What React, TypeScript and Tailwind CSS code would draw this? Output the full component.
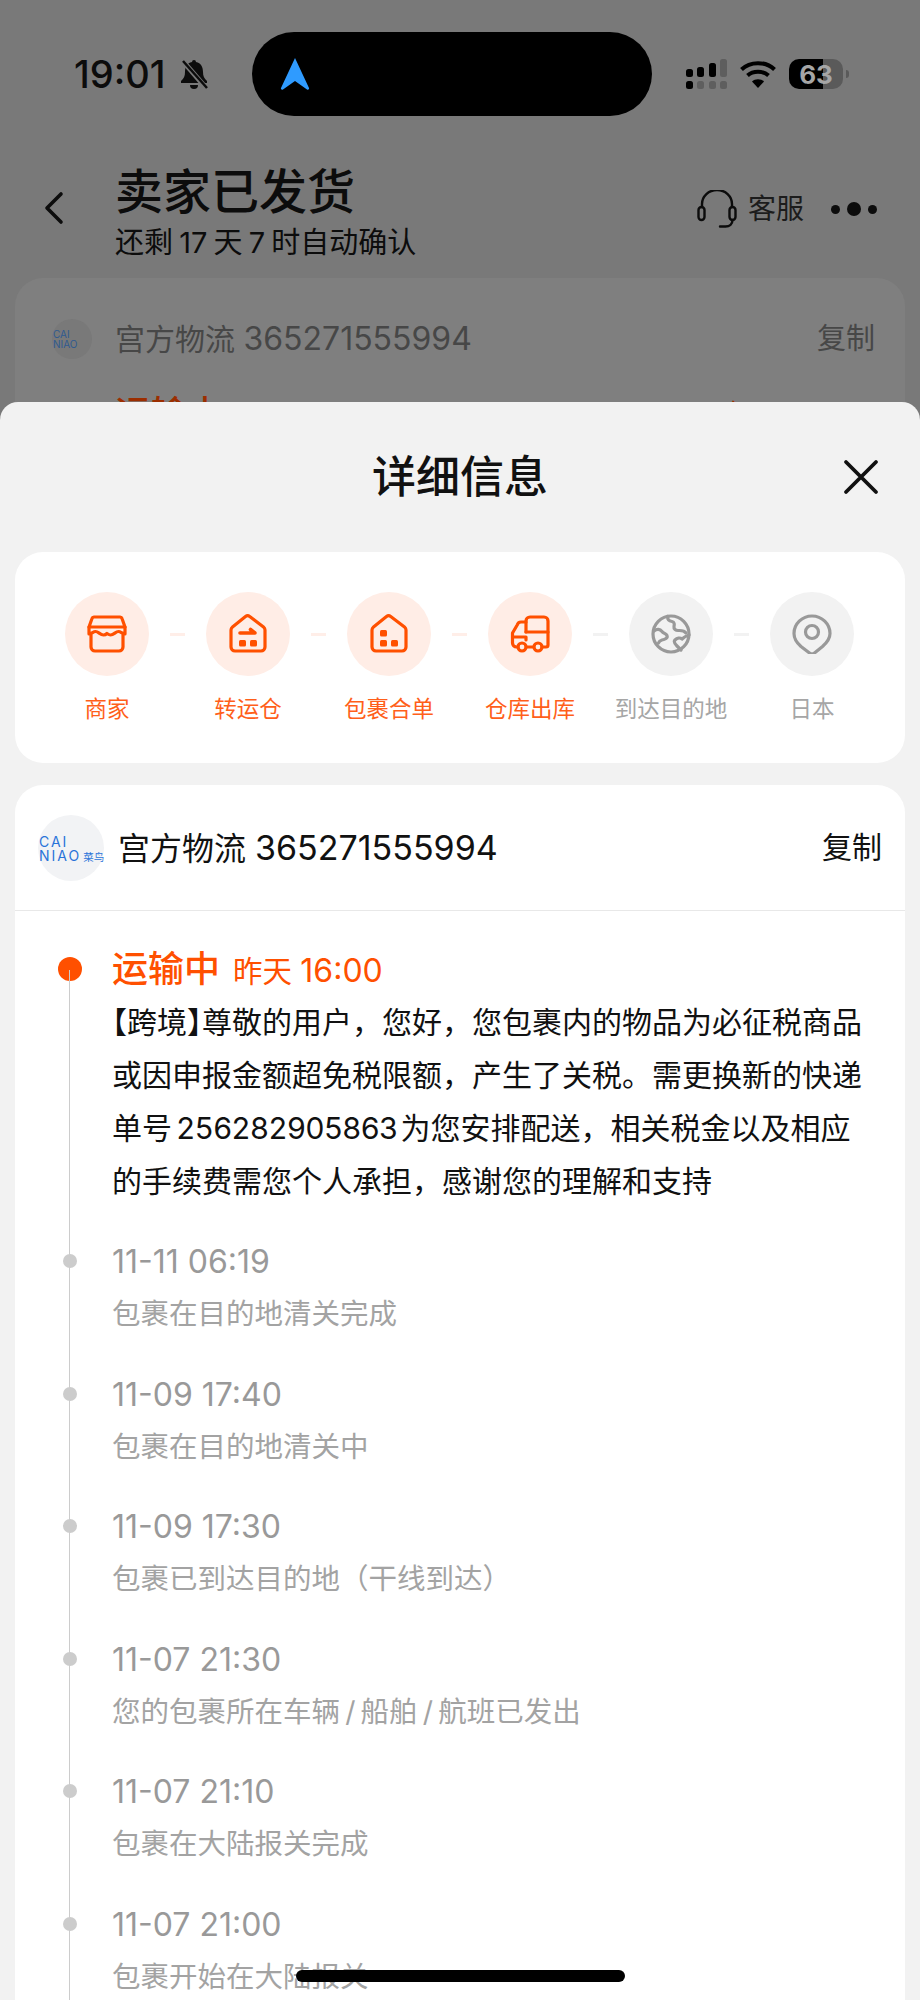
const cjk = "font-['Inter','Noto_Sans_CJK_SC',sans-serif]";

const ORANGE = '#ff5000';
const GREY = '#999999';

function Shop() {
  return (
    <svg width="40" height="40" viewBox="0 0 40 40" fill="none" stroke={ORANGE} strokeWidth="3.2" strokeLinejoin="round" strokeLinecap="round">
      <path d="M7 3h26a2 2 0 0 1 2 1.500L38 13H2l3-8.500A2 2 0 0 1 7 3z" />
      <path d="M2 13v7c3 0 4-2.500 6.500-2.500 3 0 4.500 3.500 8 3.500 1.500 0 2.500-.5 3.500-1.500 1.500 1 2.500 1.500 3.500 1.500 3.500 0 5-3.500 8-3.500 2.500 0 3.500 2.500 6.500 2.500v-7" />
      <path d="M4 21v12a4 4 0 0 0 4 4h24a4 4 0 0 0 4-4V21" />
    </svg>
  );
}

function HouseOutline() {
  return <path d="M17.500 2.500a3.500 3.500 0 0 1 4.200 0L35.500 13a4 4 0 0 1 1.500 3.200V33a4 4 0 0 1-4 4H7a4 4 0 0 1-4-4V16.200A4 4 0 0 1 4.500 13z" />;
}

function Transfer() {
  return (
    <svg width="40" height="40" viewBox="0 0 40 40" fill="none" stroke={ORANGE} strokeWidth="3.2" strokeLinejoin="round" strokeLinecap="round">
      <HouseOutline />
      <path d="M12 19h15l-4.500-3.500" strokeWidth="3.600" />
      <rect x="11" y="26" width="7" height="6.500" rx="1.500" fill={ORANGE} stroke="none" />
      <rect x="22" y="26" width="7" height="6.500" rx="1.500" fill={ORANGE} stroke="none" />
    </svg>
  );
}

function Parcels() {
  return (
    <svg width="40" height="40" viewBox="0 0 40 40" fill="none" stroke={ORANGE} strokeWidth="3.2" strokeLinejoin="round">
      <HouseOutline />
      <rect x="11" y="16" width="7" height="6.500" rx="1.500" fill={ORANGE} stroke="none" />
      <rect x="11" y="26" width="7" height="6.500" rx="1.500" fill={ORANGE} stroke="none" />
      <rect x="22" y="26" width="7" height="6.500" rx="1.500" fill={ORANGE} stroke="none" />
    </svg>
  );
}

function Truck() {
  return (
    <svg width="40" height="40" viewBox="0 0 40 40" fill="none" stroke={ORANGE} strokeWidth="3.2" strokeLinejoin="round" strokeLinecap="round">
      <path d="M16 18V7a4 4 0 0 1 4-4h14a4 4 0 0 1 4 4v24a2 2 0 0 1-2 2h-4" />
      <path d="M16 18h22" />
      <path d="M16 8h-5a4 4 0 0 0-3.800 3L2.500 19v10a4 4 0 0 0 4 4H8" />
      <path d="M2.500 23H16v3" />
      <path d="M16.500 33h7" />
      <circle cx="12" cy="33" r="4" />
      <circle cx="28" cy="33" r="4" />
    </svg>
  );
}

function Globe() {
  return (
    <svg width="40" height="40" viewBox="0 0 40 40" fill="none" stroke={GREY} strokeWidth="3.2" strokeLinejoin="round" strokeLinecap="round">
      <circle cx="20" cy="20" r="18" />
      <path d="M17 2.500c-1 3 1 4.500 4 5 2.500.5 2.500 3 2 5-.5 2.500 2 4 4 4 3 0 6-.5 8 2.500" />
      <path d="M3 17c3-2.500 6-2 8 .5 1.500 2 4 2 5 4 1 2.500-2 4-5 4.500-2 .5-3 1.500-3.500 3" />
      <path d="M38 21c-3 1-5 2-7 4-2-1.500-5-1-7 1-1.500 1.500 0 4 2 6 1.500 1.500 3 3 4 4" />
    </svg>
  );
}

function Pin() {
  return (
    <svg width="40" height="40" viewBox="0 0 40 40" fill="none" stroke={GREY} strokeWidth="3.2" strokeLinejoin="round">
      <path d="M20 2C10 2 2 10 2 19.500c0 6 3 9.500 7 13l8.500 6.500a4 4 0 0 0 5 0l8-6.500c4-3.500 7.500-7 7.500-13C38 10 30 2 20 2z" />
      <circle cx="20" cy="18" r="6.500" />
    </svg>
  );
}

const steps = [
  { label: '商家', icon: <Shop />, done: true },
  { label: '转运仓', icon: <Transfer />, done: true },
  { label: '包裹合单', icon: <Parcels />, done: true },
  { label: '仓库出库', icon: <Truck />, done: true },
  { label: '到达目的地', icon: <Globe />, done: false },
  { label: '日本', icon: <Pin />, done: false },
];

const history = [
  { time: '11-11 06:19', text: '包裹在目的地清关完成' },
  { time: '11-09 17:40', text: '包裹在目的地清关中' },
  { time: '11-09 17:30', text: '包裹已到达目的地（干线到达）' },
  { time: '11-07 21:30', text: '您的包裹所在车辆\u2009/\u2009船舶\u2009/\u2009航班已发出' },
  { time: '11-07 21:10', text: '包裹在大陆报关完成' },
  { time: '11-07 21:00', text: '包裹开始在大陆报关' },
];

function StatusBar() {
  return (
    <div className="flex h-[116px] items-start pt-[32px] pl-[74px]">
      <div className="flex h-[84px] w-[178px] items-center gap-[13px]">
        <span className="text-[38px] font-medium text-[#0c0c0c]">19:01</span>
        <svg width="30" height="30" viewBox="0 0 30 30">
          <path d="M15 1a2 2 0 0 1 2 2c5 1 7 5 7 10 0 4 1 6 4 9v2H2v-2c3-3 4-5 4-9 0-5 2-9 7-10a2 2 0 0 1 2-2z" fill="#0c0c0c" />
          <path d="M11 26h8a4 4 0 0 1-8 0z" fill="#0c0c0c" />
          <path d="M3 1l24 28" stroke="#797979" strokeWidth="5" />
          <path d="M4 2l24 27" stroke="#0c0c0c" strokeWidth="2.500" />
        </svg>
      </div>
      <div className="flex h-[84px] w-[400px] items-center rounded-[42px] bg-black pl-[28px]">
        <svg width="30" height="32" viewBox="0 0 30 32">
          <path d="M15 0l14 30c.5 1.500-1 2-2 1.500L15 23 3 31.500c-1 .5-2.500 0-2-1.500z" fill="#2f9bff" />
        </svg>
      </div>
      <div className="ml-[34px] flex h-[84px] items-center gap-[13px]">
        <svg width="41" height="30" viewBox="0 0 41 30">
          <rect x="0" y="10" width="7" height="8" rx="2.500" fill="#000" />
          <rect x="11" y="8" width="7" height="10" rx="2.500" fill="#000" />
          <rect x="23" y="4" width="7" height="14" rx="2.500" fill="#000" />
          <rect x="34" y="0" width="7" height="18" rx="2.500" fill="#5e5e5e" />
          <rect x="0" y="22" width="7" height="8" rx="2.500" fill="#000" />
          <rect x="11" y="22" width="7" height="8" rx="2.500" fill="#5e5e5e" />
          <rect x="23" y="22" width="7" height="8" rx="2.500" fill="#5e5e5e" />
          <rect x="34" y="22" width="7" height="8" rx="2.500" fill="#5e5e5e" />
        </svg>
        <svg width="36" height="28" viewBox="0 0 36 28" fill="none" stroke="#000" strokeWidth="4">
          <path d="M1.500 9.500C10 1 26 1 34.500 9.500" />
          <path d="M7.500 15.500C13 10.500 23 10.500 28.500 15.500" />
          <path d="M18 28l-6-6.500c3-3 9-3 12 0z" fill="#000" stroke="none" />
        </svg>
        <div className="flex items-center gap-[3px]">
          <div className="flex h-[30px] w-[54px] items-center justify-center rounded-[10px] bg-[linear-gradient(90deg,#000_63%,#5a5a5a_63%)] text-[26px] font-bold text-[#a6a6a6]">
            63
          </div>
          <div className="h-[8px] w-[3px] rounded-r-full bg-[#5a5a5a]" />
        </div>
      </div>
    </div>
  );
}

function BackgroundPage() {
  return (
    <div className={`h-[2000px] bg-[#797979] ${cjk}`}>
      <StatusBar />
      <div className="flex h-[162px] items-start">
        <svg width="24" height="34" viewBox="0 0 24 34" fill="none" stroke="#0c0c0c" strokeWidth="3.600" strokeLinecap="round" strokeLinejoin="round" className="mt-[75px] ml-[42px]">
          <path d="M19 3L5 17l14 14" />
        </svg>
        <div className="ml-[49px] flex-1 pt-[46px]">
          <div className="text-[48px] leading-[60px] font-medium text-[#0c0c0c]">卖家已发货</div>
          <div className="mt-[2px] text-[29px] leading-[38px] text-[#0c0c0c] [word-spacing:-2px]">还剩 17 天 7 时自动确认</div>
        </div>
        <div className="mt-[72px] mr-[43px] flex items-center">
          <svg width="40" height="38" viewBox="0 0 40 38" fill="none" stroke="#0c0c0c" strokeWidth="2.400" strokeLinecap="round">
            <path d="M5 17v-3a15 14 0 0 1 30 0v3" />
            <rect x="1.500" y="17" width="6" height="13" rx="3" />
            <rect x="32.500" y="17" width="6" height="13" rx="3" />
            <path d="M35.500 30c0 4-3 6.500-7 6.500H23" />
          </svg>
          <span className="ml-[11px] text-[28px] text-[#1c1c1c]">客服</span>
          <div className="ml-[27px] flex items-center gap-[7px]">
            <span className="size-[9px] rounded-full bg-[#0c0c0c]" />
            <span className="size-[14px] rounded-full bg-[#0c0c0c]" />
            <span className="size-[9px] rounded-full bg-[#0c0c0c]" />
          </div>
        </div>
      </div>
      <div className="mx-[15px] h-[400px] rounded-[28px] bg-[#7f7f7f] pt-[37px] pl-[37px]">
        <div className="flex items-center pr-[30px]">
          <div className="flex size-[40px] flex-col justify-center rounded-full bg-[#797979] pl-[1px] text-[10px] leading-[10px] text-[#2f5a90]">
            <span>CAI</span>
            <span>NIAO</span>
          </div>
          <span className="ml-[23px] flex-1 text-[30px] text-[#474747]">
            宫方物流 <span className="text-[32px]">365271555994</span>
          </span>
          <span className="text-[29px] text-[#474747]">复制</span>
        </div>
        <div className="mt-[28px] flex items-start justify-between pr-[60px] pl-[63px]">
          <span className="text-[36px] leading-[46px] font-medium text-[#9c2e00]">运输中</span>
          <span className="text-[26px] leading-[46px] text-[#9c2e00]">昨天 16:00</span>
        </div>
      </div>
    </div>
  );
}

function StepTrack() {
  return (
    <div className="flex h-[211px] items-start rounded-[28px] bg-white pt-[40px] pl-[50px]">
      {steps.map((step, i) => (
        <div key={step.label} className="flex items-start">
          {i > 0 && (
            <div className={`mx-[21px] mt-[41px] h-[3px] w-[15px] ${step.done ? 'bg-[#ffeee8]' : 'bg-[#f2f2f2]'}`} />
          )}
          <div className="flex w-[84px] flex-col items-center">
            <div className={`flex size-[84px] items-center justify-center rounded-full ${step.done ? 'bg-[#ffede6]' : 'bg-[#f2f2f2]'}`}>
              {step.icon}
            </div>
            <span className={`mt-[18px] text-[22.500px] leading-[30px] whitespace-nowrap ${step.done ? 'text-[#ff5f1a]' : 'text-[#a6a6a6]'}`}>
              {step.label}
            </span>
          </div>
        </div>
      ))}
    </div>
  );
}

function CainiaoLogo() {
  return (
    <div className="relative size-[66px] shrink-0 rounded-full bg-[#f2f3f5] text-[#2a73d9]">
      <div className="absolute top-[20px] left-[1px] flex flex-col text-[14px] leading-[14px] tracking-[2px]">
        <span>CAI</span>
        <span className="whitespace-nowrap">
          NIAO<span className="ml-[2px] text-[10.500px] tracking-normal">菜鸟</span>
        </span>
      </div>
    </div>
  );
}

function Timeline() {
  return (
    <div className="relative pt-[32px]">
      <div className="absolute top-[59px] bottom-0 left-[54px] w-px bg-[#cccccc]" />
      <div className="flex">
        <div className="w-[97px] shrink-0 pt-[14px] pl-[43px]">
          <div className="size-[24px] rounded-full bg-[#ff5000]" />
        </div>
        <div>
          <div className="h-[53px] text-[29.500px] leading-[53px] whitespace-nowrap text-[#ff5000]">
            <span className="mr-[13px] text-[36px] font-medium">运输中</span>
            昨天 <span className="text-[32px]">16:00</span>
          </div>
          <p className="text-[30px] leading-[53px] whitespace-nowrap text-[#111111]">
            <span className="[font-feature-settings:'halt']">【</span>跨境<span className="[font-feature-settings:'halt']">】</span>尊敬的用户，您好，您包裹内的物品为必征税商品
            <br />
            或因申报金额超免税限额，产生了关税。需更换新的快递
            <br />
            单号<span className="ml-[4px] tracking-[-1px] tabular-nums">256282905863</span>
            <span className="ml-[3px]">为您安排配送，相关税金以及相应</span>
            <br />
            的手续费需您个人承担，感谢您的理解和支持
          </p>
        </div>
      </div>
      <div className="mt-[27px] flex flex-col gap-[27.500px]">
        {history.map((row) => (
          <div key={row.time} className="flex">
            <div className="w-[97px] shrink-0 pt-[19px] pl-[48px]">
              <div className="size-[14px] rounded-full bg-[#cccccc]" />
            </div>
            <div>
              <div className="h-[53px] text-[32px] leading-[53px] text-[#999999]">{row.time}</div>
              <div className="h-[52px] text-[28.500px] leading-[52px] text-[#a3a3a3]">{row.text}</div>
            </div>
          </div>
        ))}
      </div>
    </div>
  );
}

function DetailSheet() {
  return (
    <div className={`absolute inset-x-0 top-[402px] bottom-0 overflow-hidden rounded-t-[18px] bg-[#f2f2f2] px-[15px] ${cjk}`}>
      <div className="relative flex h-[150px] items-center justify-center">
        <span className="text-[44px] font-medium text-[#111111]">详细信息</span>
        <svg width="36" height="36" viewBox="0 0 36 36" fill="none" stroke="#111111" strokeWidth="3.800" strokeLinecap="round" className="absolute top-[57px] right-[26px]">
          <path d="M3 3l30 30M33 3L3 33" />
        </svg>
      </div>
      <StepTrack />
      <div className="mt-[22px] rounded-t-[28px] bg-white">
        <div className="flex h-[126px] items-center border-b border-[#e8e8e8] pr-[23px] pl-[23px]">
          <CainiaoLogo />
          <span className="ml-[14px] flex-1 text-[32px] text-[#111111]">
            宫方物流 <span className="text-[34px]">365271555994</span>
          </span>
          <span className="text-[30px] text-[#111111]">复制</span>
        </div>
        <Timeline />
      </div>
    </div>
  );
}

export default function App() {
  return (
    <div className="relative h-[2000px] w-[920px] overflow-hidden">
      <BackgroundPage />
      <DetailSheet />
      <div className="absolute top-[1970px] left-[296px] h-[12px] w-[329px] rounded-full bg-black" />
    </div>
  );
}
